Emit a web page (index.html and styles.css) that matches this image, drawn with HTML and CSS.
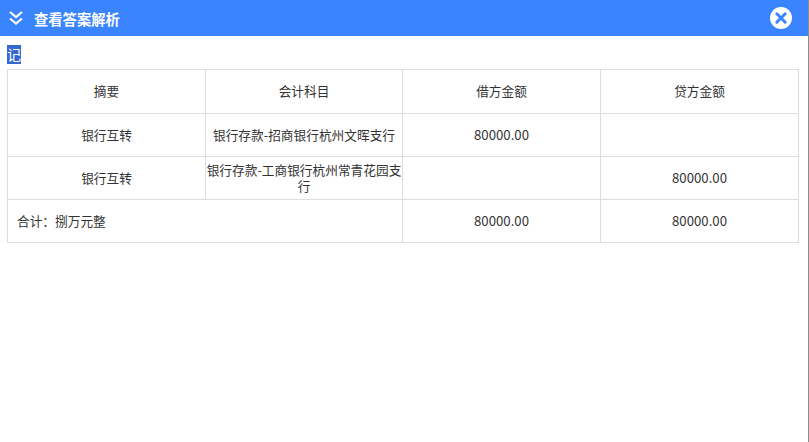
FILE: index.html
```html
<!DOCTYPE html>
<html lang="zh-CN">
<head>
<meta charset="utf-8">
<title>查看答案解析</title>
<link rel="stylesheet" href="styles.css">
</head>
<body>
<div class="dialog">
  <header class="head">
    <svg class="chev" width="16" height="16" viewBox="0 0 16 16" aria-hidden="true"><path d="M2 2l6 5 6-5M2 8.500l6 5 6-5" fill="none" stroke="#fff" stroke-width="2.200"/></svg>
    <h1 class="title">查看答案解析</h1>
    <svg class="close" width="22" height="22" viewBox="0 0 22 22" aria-hidden="true"><circle cx="11" cy="11" r="11" fill="#fff"/><path d="M6.800 6.800l8.400 8.400M15.200 6.800l-8.400 8.400" stroke="#3a84ff" stroke-width="3" stroke-linecap="round"/></svg>
  </header>
  <main class="body">
    <div class="mark"><span class="sel">记</span></div>
    <table class="voucher">
      <colgroup><col class="c1"><col class="c2"><col class="c3"><col class="c4"></colgroup>
      <tr class="r1"><td>摘要</td><td>会计科目</td><td>借方金额</td><td>贷方金额</td></tr>
      <tr class="r2"><td>银行互转</td><td>银行存款-招商银行杭州文晖支行</td><td class="num">80000.00</td><td></td></tr>
      <tr class="r3"><td>银行互转</td><td>银行存款-工商银行杭州常青花园支行</td><td></td><td class="num">80000.00</td></tr>
      <tr class="r3"><td colspan="2" class="sum">合计：捌万元整</td><td class="num">80000.00</td><td class="num">80000.00</td></tr>
    </table>
  </main>
</div>
</body>
</html>
```
FILE: styles.css
```css
html, body { margin: 0; padding: 0; background: #fff; }
body { font-family: "Noto Sans CJK SC", "Liberation Sans", sans-serif; color: #333; overflow: hidden; }
.dialog { width: 808px; height: 442px; border-right: 1px solid #8c8c8c; box-sizing: content-box; }
.head { height: 36px; background: #3a84ff; display: flex; align-items: center; padding: 0 16px 0 8px; box-sizing: border-box; }
.chev { flex: none; }
.title { margin: 0 0 0 10px; flex: 1; font-size: 14.300px; font-weight: 700; color: #fff; }
.close { flex: none; }
.body { padding: 9px 0 0 7px; }
.mark { height: 19px; margin-bottom: 5px; font-size: 14px; line-height: 19px; }
.sel { display: inline-block; width: 14px; height: 19px; background: #3367d1; color: #fff; }
.voucher { width: 791px; table-layout: fixed; border-collapse: collapse; font-size: 12.700px; color: #333; }
.c1 { width: 198px; } .c2 { width: 197px; } .c3 { width: 198px; } .c4 { width: 198px; }
.voucher td { border: 1px solid #ddd; text-align: center; padding: 0 0 1px; line-height: 16px; }
.voucher td.num { font-size: 13.200px; }
.r1 { height: 44px; } .r2, .r3 { height: 43px; }
.voucher td.sum { text-align: left; padding-left: 9px; }
```
